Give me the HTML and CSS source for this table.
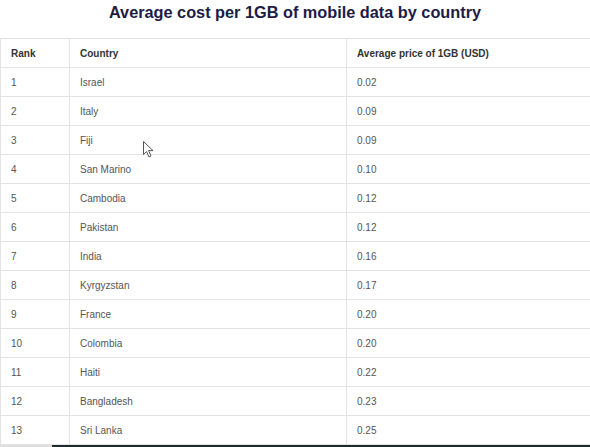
FILE: index.html
```html
<!DOCTYPE html>
<html>
<head>
<meta charset="utf-8">
<link rel="stylesheet" href="styles.css">
</head>
<body>
<div class="page">
  <h1 class="title">Average cost per 1GB of mobile data by country</h1>
  <table class="data">
    <thead>
      <tr><th class="c1">Rank</th><th class="c2">Country</th><th class="c3">Average price of 1GB (USD)</th></tr>
    </thead>
    <tbody>
      <tr><td>1</td><td>Israel</td><td>0.02</td></tr>
      <tr><td>2</td><td>Italy</td><td>0.09</td></tr>
      <tr><td>3</td><td>Fiji</td><td>0.09</td></tr>
      <tr><td>4</td><td>San Marino</td><td>0.10</td></tr>
      <tr><td>5</td><td>Cambodia</td><td>0.12</td></tr>
      <tr><td>6</td><td>Pakistan</td><td>0.12</td></tr>
      <tr><td>7</td><td>India</td><td>0.16</td></tr>
      <tr><td>8</td><td>Kyrgyzstan</td><td>0.17</td></tr>
      <tr><td>9</td><td>France</td><td>0.20</td></tr>
      <tr><td>10</td><td>Colombia</td><td>0.20</td></tr>
      <tr><td>11</td><td>Haiti</td><td>0.22</td></tr>
      <tr><td>12</td><td>Bangladesh</td><td>0.23</td></tr>
      <tr><td>13</td><td>Sri Lanka</td><td>0.25</td></tr>
    </tbody>
  </table>
  <div class="bottombar"><div class="bb-left"></div><div class="bb-right"></div></div>
  <svg class="cursor" width="12" height="18" viewBox="0 0 12 18"><path d="M0.5 0.5 L0.5 13.5 L3.5 10.5 L6 16 L8 15 L5.6 9.6 L10 9.6 Z" fill="#fff" stroke="#555" stroke-width="1"/></svg>
</div>
</body>
</html>
```
FILE: styles.css
```css
html, body {
  margin: 0;
  padding: 0;
  background: #fff;
  overflow: hidden;
}
.page {
  position: relative;
  width: 590px;
  height: 447px;
  overflow: hidden;
  font-family: "Liberation Sans", Arial, sans-serif;
}
.title {
  margin: 0;
  padding-top: 2px;
  height: 38px;
  box-sizing: border-box;
  text-align: center;
  font-size: 16.3px;
  font-weight: bold;
  color: #1c1c45;
  line-height: 21px;
}
.data {
  border-collapse: collapse;
  width: 640px;
  table-layout: fixed;
  font-size: 10px;
  color: #555;
}
.data th, .data td {
  border: 1px solid #e3e3e3;
  height: 28px;
  padding: 0 10px;
  text-align: left;
  box-sizing: border-box;
}
.data tr { height: 29px; }
.data th {
  font-weight: bold;
  color: #333;
}
.c1 { width: 69px; }
.c2 { width: 277px; }
.c3 { width: 294px; }
.bottombar {
  display: flex;
  height: 4px;
}
.bb-left { width: 52px; background: #dedede; }
.bb-right { flex: 1; background: #1c2b30; }
.cursor {
  position: absolute;
  left: 143px;
  top: 141px;
}
```
